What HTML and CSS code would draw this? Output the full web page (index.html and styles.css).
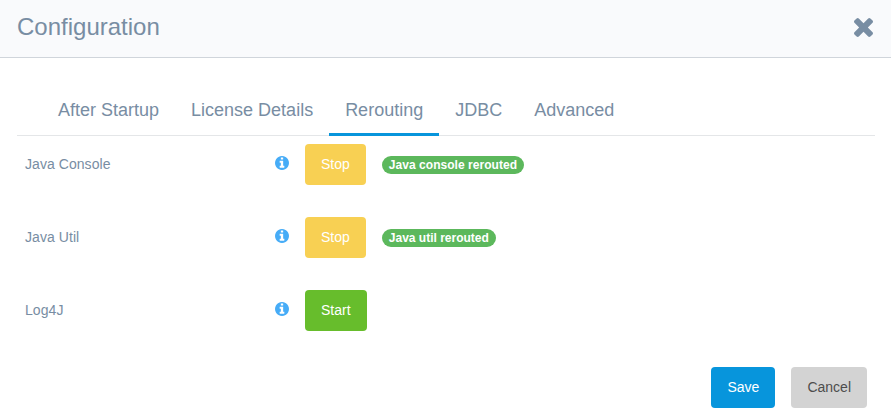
FILE: index.html
```html
<!DOCTYPE html>
<html lang="en">
<head>
<meta charset="utf-8">
<title>Configuration</title>
<link rel="stylesheet" href="styles.css">
</head>
<body>
<svg class="defs" width="0" height="0">
  <symbol id="info" viewBox="128 128 1536 1536"><path d="M1152 1376v-160q0-14-9-23t-23-9h-96v-512q0-14-9-23t-23-9h-320q-14 0-23 9t-9 23v160q0 14 9 23t23 9h96v320h-96q-14 0-23 9t-9 23v160q0 14 9 23t23 9h448q14 0 23-9t9-23zm-128-896v-160q0-14-9-23t-23-9h-192q-14 0-23 9t-9 23v160q0 14 9 23t23 9h192q14 0 23-9t9-23zm640 416q0 209-103 385.5t-279.5 279.5-385.5 103-385.5-103-279.5-279.5-103-385.5 103-385.5 279.5-279.5 385.5-103 385.5 103 279.5 279.5 103 385.5z"/></symbol>
</svg>
<header class="header">
  <h1 class="title">Configuration</h1>
  <svg class="close" viewBox="302 366 1188 1188"><path d="M1490 1322q0 40-28 68l-136 136q-28 28-68 28t-68-28l-294-294-294 294q-28 28-68 28t-68-28l-136-136q-28-28-28-68t28-68l294-294-294-294q-28-28-28-68t28-68l136-136q28-28 68-28t68 28l294 294 294-294q28-28 68-28t68 28l136 136q28 28 28 68t-28 68l-294 294 294 294q28 28 28 68z"/></svg>
</header>
<main class="content">
  <nav class="tabs">
    <a class="tab">After Startup</a>
    <a class="tab">License Details</a>
    <a class="tab active">Rerouting</a>
    <a class="tab">JDBC</a>
    <a class="tab">Advanced</a>
  </nav>
  <div class="row">
    <span class="label">Java Console</span>
    <svg class="info"><use href="#info"/></svg>
    <button class="btn stop">Stop</button>
    <span class="badge console">Java console rerouted</span>
  </div>
  <div class="row">
    <span class="label">Java Util</span>
    <svg class="info"><use href="#info"/></svg>
    <button class="btn stop">Stop</button>
    <span class="badge">Java util rerouted</span>
  </div>
  <div class="row">
    <span class="label">Log4J</span>
    <svg class="info"><use href="#info"/></svg>
    <button class="btn start">Start</button>
  </div>
  <footer class="actions">
    <button class="btn save">Save</button>
    <button class="btn cancel">Cancel</button>
  </footer>
</main>
</body>
</html>
```
FILE: styles.css
```css
* { box-sizing: border-box; }
body {
  margin: 0;
  height: 416px;
  overflow: hidden;
  background: #fff;
  color: #788da3;
  font: 14px/20px "Liberation Sans", Arial, sans-serif;
}
.defs { display: block; }
.header {
  height: 58px;
  padding: 0 17px 4px;
  display: flex;
  align-items: center;
  justify-content: space-between;
  background: #f9fafc;
  border-bottom: 1px solid #d0d5db;
}
.title { margin: 0; font-size: 24px; line-height: 30px; font-weight: 400; }
.close { width: 19px; height: 19px; margin: 2px 1px 0 0; fill: #788da3; }
.content { padding: 28px 16px 0 17px; }
.tabs {
  display: flex;
  height: 50px;
  padding-left: 25px;
  border-bottom: 1px solid #e4e6e8;
}
.tab { height: 50px; padding: 12px 16px 0; font-size: 18px; line-height: 24px; white-space: nowrap; }
.tab.active { border-bottom: 3px solid #0795dc; }
.row { display: flex; align-items: center; height: 73px; padding: 8px 8px 24px; }
.label { width: 250px; padding-bottom: 2px; letter-spacing: 0.06px; }
.info { width: 14px; height: 14px; margin: 0 16px 3px 0; fill: #46acf7; }
.btn {
  height: 41px;
  padding: 0 16px 2px;
  border: 0;
  border-radius: 4px;
  font: inherit;
  color: #fff;
}
.stop { background: #f8d053; }
.start { background: #67bd2c; }
.badge {
  margin-left: 16px;
  padding: 0 7px;
  border-radius: 9px;
  background: #5cb85c;
  color: #fff;
  font-size: 12px;
  line-height: 18px;
  font-weight: 700;
}
.console { letter-spacing: 0.04px; }
.actions { display: flex; justify-content: flex-end; gap: 16px; padding: 12px 8px 0; }
.save { background: #0795dc; }
.cancel { background: #d3d3d3; color: #4d4d4d; }
```
